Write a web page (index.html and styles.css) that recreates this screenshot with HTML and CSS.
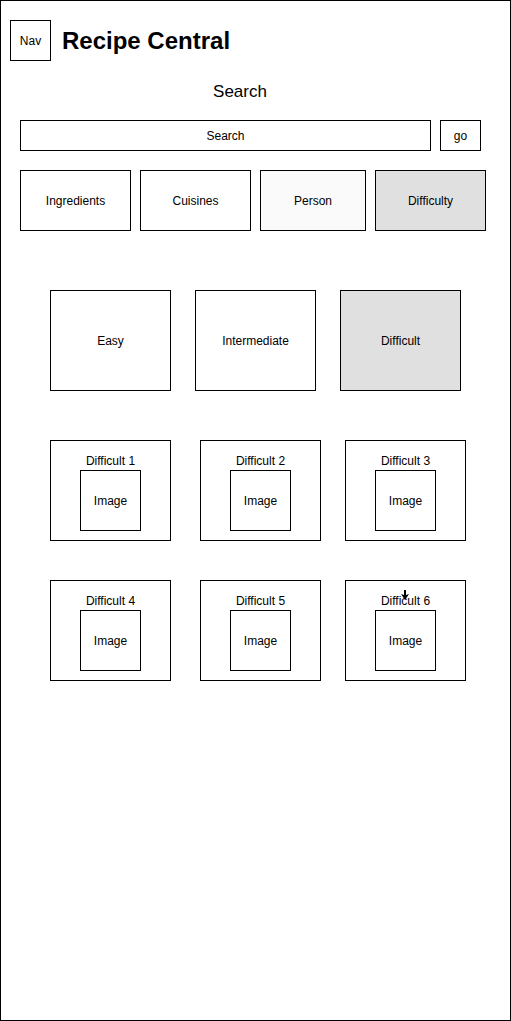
FILE: index.html
```html
<!DOCTYPE html>
<html lang="en">
<head>
    <meta charset="UTF-8">
    <meta name="viewport" content="width=device-width, initial-scale=1.0">
    <title>Recipe Central</title>
    <link rel="stylesheet" href="styles.css">
</head>
<body>

<div class="frame">
    <!-- Header -->
    <div class="header">
        <div class="box nav-box">Nav</div>
        <h1 class="site-title">Recipe Central</h1>
    </div>

    <!-- Search -->
    <div class="search-heading">Search</div>
    <div class="search-row">
        <div class="box search-input">Search</div>
        <div class="box go-button">go</div>
    </div>

    <!-- Category tabs -->
    <div class="tab-row">
        <div class="box tab">Ingredients</div>
        <div class="box tab">Cuisines</div>
        <div class="box tab tab-person">Person</div>
        <div class="box tab tab-active">Difficulty</div>
    </div>

    <!-- Difficulty levels -->
    <div class="level-row">
        <div class="box level">Easy</div>
        <div class="box level">Intermediate</div>
        <div class="box level level-active">Difficult</div>
    </div>

    <!-- Recipes -->
    <div class="recipe-grid">
        <div class="box recipe">
            <p class="recipe-title">Difficult 1</p>
            <div class="box recipe-image">Image</div>
        </div>
        <div class="box recipe">
            <p class="recipe-title">Difficult 2</p>
            <div class="box recipe-image">Image</div>
        </div>
        <div class="box recipe">
            <p class="recipe-title">Difficult 3</p>
            <div class="box recipe-image">Image</div>
        </div>
        <div class="box recipe">
            <p class="recipe-title">Difficult 4</p>
            <div class="box recipe-image">Image</div>
        </div>
        <div class="box recipe">
            <p class="recipe-title">Difficult 5</p>
            <div class="box recipe-image">Image</div>
        </div>
        <div class="box recipe">
            <p class="recipe-title">Difficult 6</p>
            <div class="box recipe-image">Image</div>
            <svg class="cursor" width="10" height="12" viewBox="0 0 10 12">
                <path d="M5 11 L1 5 L4 6 L4 1 L6 1 L6 6 L9 5 Z" fill="#000"/>
            </svg>
        </div>
    </div>
</div>

</body>
</html>
```

FILE: styles.css
```css
body {
    margin: 0;
    font-family: "Liberation Sans", Arial, sans-serif;
    color: #000;
}

.frame {
    width: 511px;
    height: 1021px;
    border: 1px solid #000;
    box-sizing: border-box;
}

.box {
    border: 1px solid #000;
    box-sizing: border-box;
    background-color: #fff;
    display: flex;
    justify-content: center;
    align-items: center;
    font-size: 12px;
}

/* Header */
.header {
    display: flex;
    align-items: center;
    margin: 19px 0 0 9px;
}

.nav-box {
    width: 41px;
    height: 41px;
}

.site-title {
    margin: 0 0 0 11px;
    font-size: 24px;
    font-weight: bold;
}

/* Search */
.search-heading {
    width: 440px;
    margin: 21px 0 0 19px;
    text-align: center;
    font-size: 17px;
    line-height: 20px;
}

.search-row {
    display: flex;
    gap: 9px;
    margin: 18px 0 0 19px;
}

.search-input {
    width: 411px;
    height: 31px;
}

.go-button {
    width: 41px;
    height: 31px;
}

/* Tabs */
.tab-row {
    display: flex;
    gap: 9px;
    margin: 19px 0 0 19px;
}

.tab {
    width: 111px;
    height: 61px;
}

.tab-person {
    width: 106px;
    background-color: #fafafa;
}

.tab-active,
.level-active {
    background-color: #e0e0e0;
}

/* Levels */
.level-row {
    display: flex;
    gap: 24px;
    margin: 59px 0 0 49px;
}

.level {
    width: 121px;
    height: 101px;
}

/* Recipe grid */
.recipe-grid {
    display: grid;
    grid-template-columns: 121px 121px 121px;
    column-gap: 29px;
    row-gap: 39px;
    margin: 49px 0 0 49px;
}

.recipe {
    position: relative;
    width: 121px;
    height: 101px;
    flex-direction: column;
    justify-content: flex-start;
}

.recipe:nth-child(3n) {
    margin-left: -5px;
}

.recipe-title {
    margin: 12px 0 0 0;
    line-height: 16px;
}

.recipe-image {
    width: 61px;
    height: 61px;
    margin-top: 1px;
}

.cursor {
    position: absolute;
    left: 54px;
    top: 8px;
}
```
